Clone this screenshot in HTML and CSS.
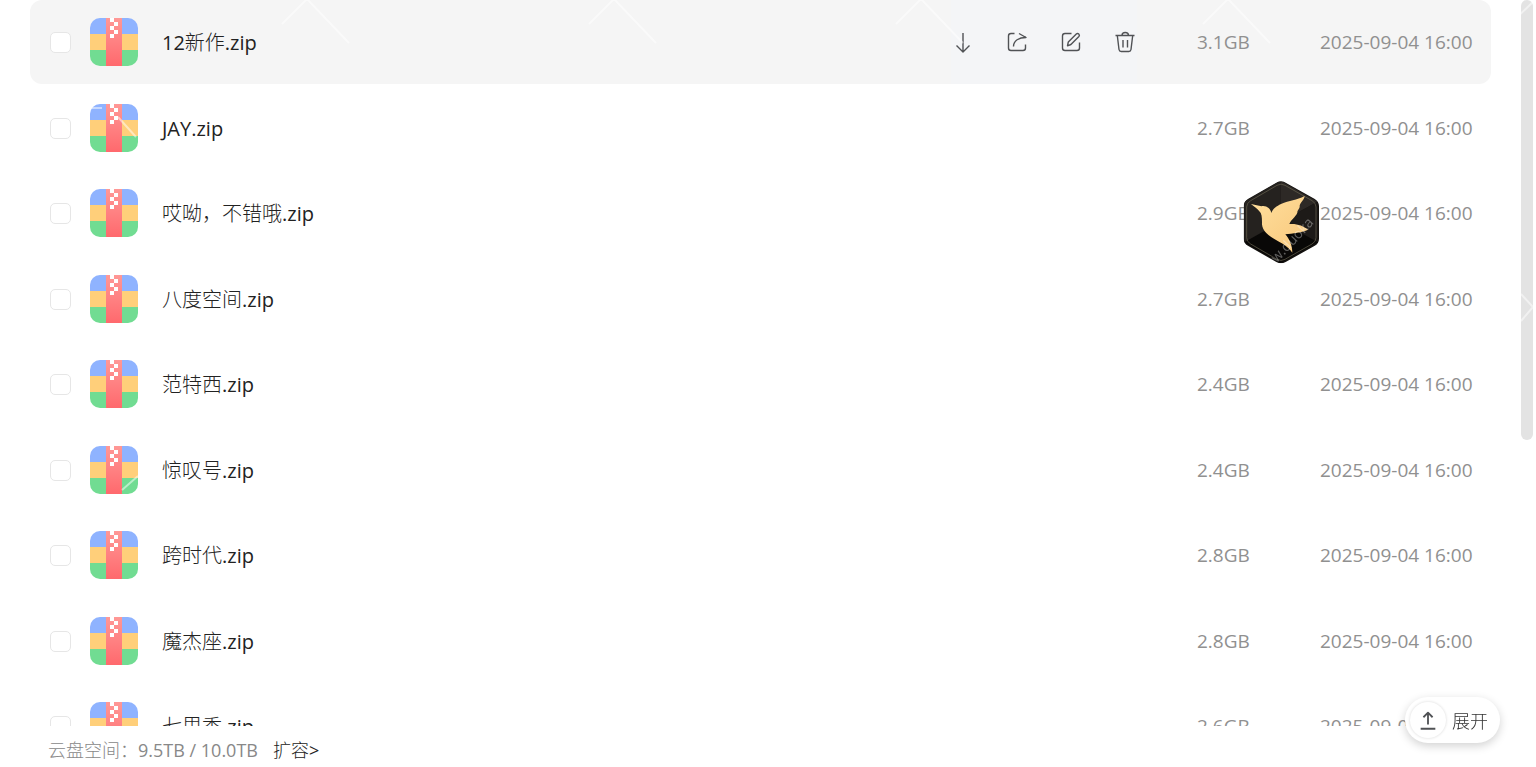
FILE: index.html
```
<!DOCTYPE html>
<html lang="zh-CN">
	<head>
		<meta charset="utf-8">
		<meta name="viewport" content="width=device-width, initial-scale=1.0">
		<title>云盘</title>
		<link rel="stylesheet" href="styles.css">
	</head>
	<body>
		<!-- shared shapes -->
		<svg class="defs" width="0" height="0" aria-hidden="true">
			<defs>
				<linearGradient id="strap" x1="0" y1="0" x2="0" y2="1">
					<stop offset="0" stop-color="#ff9896"/>
					<stop offset="1" stop-color="#ff696d"/>
				</linearGradient>
				<clipPath id="round"><rect width="48" height="48" rx="10"/></clipPath>
				<symbol id="zip" viewBox="0 0 48 48">
					<g clip-path="url(#round)">
						<rect width="48" height="16" fill="#8fb3ff"/>
						<rect y="16" width="48" height="16" fill="#ffcf7a"/>
						<rect y="32" width="48" height="16" fill="#71dc92"/>
						<rect x="16" width="16" height="48" fill="url(#strap)"/>
						<path fill="#fff" d="M20 0h4v4h-4zM24 4h4v4h-4zM20 8h4v4h-4zM24 12h4v4h-4zM20 16h4v4h-4z"/>
					</g>
				</symbol>
			</defs>
		</svg>
		<div class="page">
			<main class="files">
				<table class="list">
					<tbody>
						<tr class="row active">
							<td class="check"><input type="checkbox" aria-label="12新作.zip"></td>
							<td class="icon"><svg width="48" height="48"><use href="#zip"/></svg></td>
							<td class="name">12新作.zip</td>
							<td class="actions">
								<button type="button" aria-label="下载">
									<svg viewBox="0 0 24 24"><path d="M12 3v19M5.500 15.500l6.500 6.500 6.500-6.500"/></svg>
								</button>
								<button type="button" aria-label="分享">
									<svg viewBox="0 0 24 24"><path d="M9.500 3.500H6A2.500 2.500 0 0 0 3.500 6v12A2.500 2.500 0 0 0 6 20.500h12a2.500 2.500 0 0 0 2.500-2.500v-3.500M14 3.500l7 4c-7 0-12.500 3-12.500 9"/></svg>
								</button>
								<button type="button" aria-label="重命名">
									<svg viewBox="0 0 24 24"><path d="M12.500 3.500H6A2.500 2.500 0 0 0 3.500 6v12A2.500 2.500 0 0 0 6 20.500h12a2.500 2.500 0 0 0 2.500-2.500v-5.500M8.500 15.800l.8-3.800 8-8c1.700-1.500 4 .8 2.600 2.500l-8 8z"/></svg>
								</button>
								<button type="button" aria-label="删除">
									<svg viewBox="0 0 24 24"><path d="M2.500 5.500h19M9 5.500c0-4 6.500-4 6.500 0M4.300 5.500l1.700 14c.2 1.200 1 2 2.200 2h7.600c1.200 0 2-.8 2.200-2l1.700-14M10 10v7.500M14.500 10v7.500"/></svg>
								</button>
							</td>
							<td class="size">3.1GB</td>
							<td class="date">2025-09-04 16:00</td>
						</tr>
						<tr class="row">
							<td class="check"><input type="checkbox" aria-label="JAY.zip"></td>
							<td class="icon"><svg width="48" height="48"><use href="#zip"/></svg></td>
							<td class="name">JAY.zip</td>
							<td class="size">2.7GB</td>
							<td class="date">2025-09-04 16:00</td>
						</tr>
						<tr class="row">
							<td class="check"><input type="checkbox" aria-label="哎呦，不错哦.zip"></td>
							<td class="icon"><svg width="48" height="48"><use href="#zip"/></svg></td>
							<td class="name">哎呦，不错哦.zip</td>
							<td class="size">2.9GB</td>
							<td class="date">2025-09-04 16:00</td>
						</tr>
						<tr class="row">
							<td class="check"><input type="checkbox" aria-label="八度空间.zip"></td>
							<td class="icon"><svg width="48" height="48"><use href="#zip"/></svg></td>
							<td class="name">八度空间.zip</td>
							<td class="size">2.7GB</td>
							<td class="date">2025-09-04 16:00</td>
						</tr>
						<tr class="row">
							<td class="check"><input type="checkbox" aria-label="范特西.zip"></td>
							<td class="icon"><svg width="48" height="48"><use href="#zip"/></svg></td>
							<td class="name">范特西.zip</td>
							<td class="size">2.4GB</td>
							<td class="date">2025-09-04 16:00</td>
						</tr>
						<tr class="row">
							<td class="check"><input type="checkbox" aria-label="惊叹号.zip"></td>
							<td class="icon"><svg width="48" height="48"><use href="#zip"/></svg></td>
							<td class="name">惊叹号.zip</td>
							<td class="size">2.4GB</td>
							<td class="date">2025-09-04 16:00</td>
						</tr>
						<tr class="row">
							<td class="check"><input type="checkbox" aria-label="跨时代.zip"></td>
							<td class="icon"><svg width="48" height="48"><use href="#zip"/></svg></td>
							<td class="name">跨时代.zip</td>
							<td class="size">2.8GB</td>
							<td class="date">2025-09-04 16:00</td>
						</tr>
						<tr class="row">
							<td class="check"><input type="checkbox" aria-label="魔杰座.zip"></td>
							<td class="icon"><svg width="48" height="48"><use href="#zip"/></svg></td>
							<td class="name">魔杰座.zip</td>
							<td class="size">2.8GB</td>
							<td class="date">2025-09-04 16:00</td>
						</tr>
						<tr class="row">
							<td class="check"><input type="checkbox" aria-label="七里香.zip"></td>
							<td class="icon"><svg width="48" height="48"><use href="#zip"/></svg></td>
							<td class="name">七里香.zip</td>
							<td class="size">2.6GB</td>
							<td class="date">2025-09-04 16:00</td>
						</tr>
					</tbody>
				</table>
				<div class="scrollbar"><div class="thumb"></div></div>
			</main>
			<footer class="space">
				<span>云盘空间：9.5TB / 10.0TB</span>
				<a href="#">扩容&gt;</a>
			</footer>
		</div>

		<!-- floating bird -->
		<svg class="bird" viewBox="0 0 270 288" width="90" height="96" role="img" aria-label="迅雷">
			<defs>
				<clipPath id="hex"><path d="M121 26q14-8 28 0l86 48q14 8 14 22v98q0 14-14 22l-86 48q-14 8-28 0l-84-48q-14-8-14-22V96q0-14 14-22z"/></clipPath>
				<linearGradient id="gold" x1="0" y1="0" x2="1" y2="1">
					<stop offset="0" stop-color="#ffdf9d"/>
					<stop offset="1" stop-color="#f8c77b"/>
				</linearGradient>
			</defs>
			<g clip-path="url(#hex)">
				<path fill="#14120f" d="M0 0h270v288H0z"/>
				<path fill="#25221f" d="M134 20L25 83v122l52-25 57-38z"/>
				<path fill="#2d2926" d="M134 20l111 63-111 60z"/>
				<path fill="#1d1a18" d="M245 83v122l-111-62z"/>
				<path fill="#090807" d="M25 205l109-62 111 62-112 63z"/>
			</g>
			<path fill="none" stroke="#6a6552" stroke-width="2" d="M123 34q12-7 24 0l81 46q12 7 12 19v92q0 12-12 19l-81 46q-12 7-24 0l-79-46q-12-7-12-19V99q0-12 12-19z"/>
			<path fill="url(#gold)" d="M45 90L76 97C90 93 104 104 106 117C112 102 122 97 135 90C160 79 182 79 206 66C205 78 190 88 191 97C192 104 184 107 184 116C178 130 165 136 160 150C182 148 203 155 216 167C200 176 168 178 148 181C160 195 169 214 169 236C155 216 136 207 115 195C88 180 76 163 78 144C78 130 77 118 70 112C65 104 55 98 45 90z"/>
			<text class="mark" x="0" y="0" transform="translate(122 268) rotate(-47)">w.duoka</text>
		</svg>

		<button type="button" class="expand">
			<span class="up">
				<svg viewBox="0 0 24 24"><path d="M12 17V4M7 9l5-5 5 5M4 21.500h16"/></svg>
			</span>
			展开
		</button>

		<svg class="streaks" width="1536" height="520" aria-hidden="true">
			<path d="M282 24l25-25 42 44M589 24l25-25 42 44M896 24l25-25 42 44M1203 24l25-25 42 44M1510 24l26-25M118 117l18 20M122 490l16-14M1521 294l12 13-12 14M92 108h10"/>
		</svg>
	</body>
</html>
```
FILE: styles.css
```
* {
	box-sizing: border-box;
}

body {
	margin: 0;
	font-family: "Open Sans", "Noto Sans CJK SC Light", "Noto Sans CJK SC", sans-serif;
	font-size: 18px;
	color: #222;
	background: #fff;
	overflow: hidden;
}

button {
	padding: 0;
	border: 0;
	background: none;
	font: inherit;
	cursor: pointer;
}

button svg {
	display: block;
	fill: none;
	stroke: #505255;
	stroke-width: 1.4;
	stroke-linejoin: round;
}

.defs {
	position: absolute;
}

.page {
	display: flex;
	flex-direction: column;
	height: 100vh;
}

.files {
	display: flex;
	flex: 1;
	min-height: 0;
	overflow: hidden;
	padding: 0 3px 0 30px;
}

.list,
.list tbody {
	display: block;
	flex: 1;
}

.row {
	display: flex;
	align-items: center;
	height: 84px;
	margin-bottom: 1px;
	padding: 0 19px 0 20px;
	border-radius: 12px;
}

.row:nth-child(odd) {
	margin-bottom: 2px;
}

.row td {
	padding: 0;
}

.active {
	background: #f5f5f5;
}

.check {
	width: 40px;
}

.check input {
	appearance: none;
	display: block;
	width: 21px;
	height: 21px;
	margin: 0;
	border: 1px solid #e6e6e6;
	border-radius: 5px;
	background: #fff;
}

.icon {
	width: 72px;
}

.icon svg {
	display: block;
}

.row .name {
	flex: 1;
	padding-top: 2px;
	font-size: 20px;
	line-height: 28px;
}

.actions {
	display: flex;
	align-items: center;
	gap: 30px;
	height: 100%;
	padding: 0;
	margin-right: 60px;
	background: #f4f5f7;
}

.actions svg {
	width: 24px;
	height: 24px;
}

.size,
.date {
	font-size: 19px;
	line-height: 26px;
	color: #909090;
	white-space: nowrap;
}

.size {
	width: 123px;
}

.date {
	width: 152px;
}

.scrollbar {
	width: 12px;
	margin-left: 30px;
}

.thumb {
	height: 440px;
	border-radius: 6px;
	background: #e3e3e3;
}

.space {
	display: flex;
	gap: 15px;
	height: 41px;
	padding: 11px 48px 0;
	line-height: 26px;
	color: #888;
}

.space a {
	color: #222;
	text-decoration: none;
}

.bird {
	position: fixed;
	top: 174px;
	right: 210px;
}

.mark {
	font-size: 42px;
	fill: #fff;
	fill-opacity: 0.35;
}

.expand {
	position: fixed;
	right: 36px;
	bottom: 24px;
	display: flex;
	align-items: center;
	gap: 6px;
	height: 46px;
	padding: 0 12px 0 5px;
	border-radius: 23px;
	background: #fff;
	box-shadow: 0 3px 10px rgba(0, 0, 0, 0.18);
	color: #333;
}

.up {
	display: flex;
	align-items: center;
	justify-content: center;
	width: 36px;
	height: 36px;
	border-radius: 50%;
	box-shadow: 0 0 3px rgba(0, 0, 0, 0.16);
}

.up svg {
	width: 22px;
	height: 22px;
	stroke-width: 2;
}

.streaks {
	position: absolute;
	top: 0;
	left: 0;
	pointer-events: none;
	fill: none;
	stroke: #fff;
	stroke-width: 2;
	stroke-opacity: 0.5;
}
```
